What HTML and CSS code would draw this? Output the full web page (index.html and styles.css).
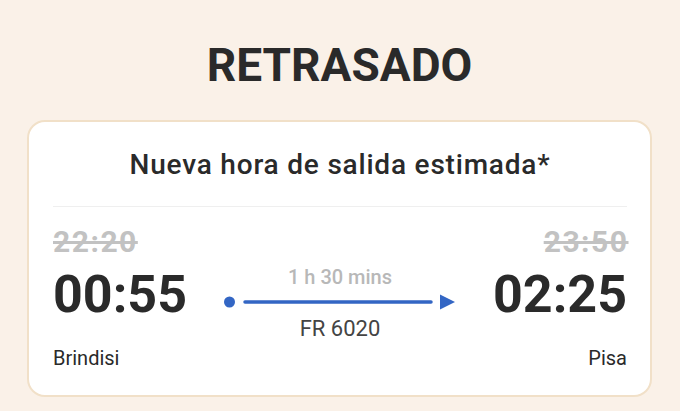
FILE: index.html
```html
<!DOCTYPE html>
<html lang="es">
<head>
<meta charset="utf-8">
<link rel="stylesheet" href="styles.css">
</head>
<body>
<div class="page">
  <h1 class="title">RETRASADO</h1>
  <div class="card">
    <h2 class="card-title">Nueva hora de salida estimada*</h2>
    <div class="divider"></div>
    <div class="route">
      <div class="end start">
        <div class="old">22:20</div>
        <div class="new">00:55</div>
        <div class="city">Brindisi</div>
      </div>
      <div class="mid">
        <div class="duration">1 h 30 mins</div>
        <svg class="path" width="232" height="16" viewBox="0 0 232 16">
          <circle cx="5.5" cy="8" r="5.5" fill="#3366c4"/>
          <line x1="21" y1="8" x2="207" y2="8" stroke="#3366c4" stroke-width="3.5" stroke-linecap="round"/>
          <polygon points="216,0.5 231,8 216,15.5" fill="#3366c4"/>
        </svg>
        <div class="flight">FR 6020</div>
      </div>
      <div class="end finish">
        <div class="old">23:50</div>
        <div class="new">02:25</div>
        <div class="city">Pisa</div>
      </div>
    </div>
  </div>
</div>
</body>
</html>
```
FILE: styles.css
```css
html, body {
  margin: 0;
  padding: 0;
  background: #faf1e8;
}
body {
  font-family: Roboto, "Noto Sans", sans-serif;
  color: #2b2b2b;
}
.page {
  padding: 38px 28px 0 27px;
}
.title {
  margin: 0;
  font-size: 46px;
  font-weight: 700;
  text-align: center;
  line-height: 54px;
  color: #2a2a2a;
}
.card {
  margin-top: 28px;
  background: #ffffff;
  border: 2px solid #f1e0c8;
  border-radius: 18px;
  height: 273px;
  padding: 0 23px 0 24px;
}
.card-title {
  margin: 0;
  padding-top: 27px;
  font-size: 28px;
  line-height: 32px;
  font-weight: 500;
  letter-spacing: 0.8px;
  text-align: center;
  color: #2a2a2a;
}
.divider {
  margin-top: 25px;
  height: 1px;
  background: #efefef;
}
.route {
  display: flex;
  justify-content: space-between;
  padding-top: 18px;
}
.end {
  display: flex;
  flex-direction: column;
}
.finish {
  align-items: flex-end;
}
.old {
  font-size: 30px;
  line-height: 34px;
  font-weight: 700;
  letter-spacing: 1.5px;
  color: #c2c2c2;
  text-decoration: line-through;
  text-decoration-thickness: 3px;
}
.finish .old {
  margin-right: -1.5px;
}
.new {
  margin-top: 8px;
  font-size: 52px;
  line-height: 56px;
  font-weight: 700;
  color: #2a2a2a;
}
.city {
  margin-top: 23px;
  font-size: 20px;
  line-height: 24px;
  color: #2a2a2a;
}
.mid {
  display: flex;
  flex-direction: column;
  align-items: center;
  padding-top: 40px;
}
.duration {
  font-size: 20px;
  line-height: 24px;
  font-weight: 500;
  color: #b8b8b8;
}
.path {
  display: block;
  margin-top: 5px;
}
.flight {
  margin-top: 6px;
  font-size: 22px;
  line-height: 26px;
  color: #444444;
}
```
